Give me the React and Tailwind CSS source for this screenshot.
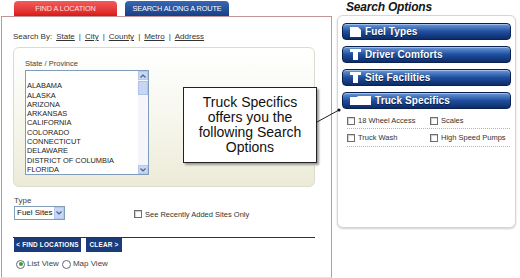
import React from 'react';

const states = [
    '',
    'ALABAMA',
    'ALASKA',
    'ARIZONA',
    'ARKANSAS',
    'CALIFORNIA',
    'COLORADO',
    'CONNECTICUT',
    'DELAWARE',
    'DISTRICT OF COLUMBIA',
    'FLORIDA',
];

// =========================================
// Small form pieces
// =========================================
const Check = ({ label, className = '' }) => (
    <div className={`flex items-center gap-[3px] ${className}`}>
        <span className="w-[8px] h-[8px] border border-[#6d6d6d] bg-white shadow-[inset_1px_1px_1px_#ccc] shrink-0" />
        <span className="text-[7.5px] leading-[9px] text-[#333]">{label}</span>
    </div>
);

const Radio = ({ label, checked }) => (
    <div className="flex items-center gap-[2px]">
        <span className="w-[9px] h-[9px] rounded-full border border-[#5f6b72] bg-white flex items-center justify-center">
            {checked && <span className="w-[4px] h-[4px] rounded-full bg-[#3a9a3a]" />}
        </span>
        <span className="text-[8px] leading-[10px] text-[#444]">{label}</span>
    </div>
);

const Chevron = ({ up }) => (
    <svg width="6" height="4" viewBox="0 0 6 4">
        <path d={up ? 'M0.5 3.5 L3 1 L5.5 3.5' : 'M0.5 0.5 L3 3 L5.5 0.5'} stroke="#4d6185" strokeWidth="1.2" fill="none" />
    </svg>
);

const FolderIcon = ({ kind }) => {
    if (kind === 'open') {
        return (
            <svg width="21" height="9" viewBox="0 0 21 9" className="shrink-0">
                <path d="M0 1 H7 L8 0 H21 V9 H0 Z" fill="#fff" />
            </svg>
        );
    }
    if (kind === 'square') {
        return (
            <svg width="11" height="10" viewBox="0 0 11 10" className="shrink-0">
                <path d="M0 0 H8 L11 3 V10 H0 Z" fill="#fff" />
            </svg>
        );
    }
    return (
        <svg width="11" height="11" viewBox="0 0 11 11" className="shrink-0">
            <path d="M0 0 H11 V3 H8 V11 H3 V3 H0 Z" fill="#fff" />
        </svg>
    );
};

const OptionBar = ({ label, icon }) => (
    <div className="h-[17px] rounded-[4px] border border-[#0a2250] bg-gradient-to-b from-[#6e9ad8] via-[#1f4f9f] to-[#0d2c68] shadow-[inset_0_1px_0_#9fc0ee] flex items-center pl-[7px] gap-[4px]">
        <FolderIcon kind={icon} />
        <span className="text-white font-bold text-[10px] leading-none tracking-[0.1px] [text-shadow:0_1px_0_#0a1f44]">{label}</span>
    </div>
);

// =========================================
// App
// =========================================
export default function App() {
    return (
        <div className="relative w-[520px] h-[278px] overflow-hidden bg-white flex font-['Liberation_Sans',Arial,sans-serif]">
            {/* Left: location search */}
            <div className="ml-[1px] w-[331px] flex flex-col">
                <div className="h-[16px] pl-[13px] flex items-end gap-[8px]">
                    <div className="w-[103px] h-[15px] rounded-t-[4px] bg-gradient-to-b from-[#f45a5a] to-[#d91616] flex items-center justify-center">
                        <span className="text-[7.3px] leading-none text-[#ffe0e0] tracking-[-0.1px]">FIND A LOCATION</span>
                    </div>
                    <div className="w-[104px] h-[15px] rounded-t-[4px] bg-gradient-to-b from-[#3868b4] to-[#173f86] flex items-center justify-center">
                        <span className="text-[7.3px] leading-none text-white tracking-[-0.1px]">SEARCH ALONG A ROUTE</span>
                    </div>
                </div>

                <div className="flex-1 border-t border-l border-r border-[#c49595] border-b border-b-[#e6e6e0] pl-[11px] pt-[15px] flex flex-col">
                    <div className="text-[8px] leading-[10px] text-[#333] flex gap-[4px]">
                        <span>Search By:</span>
                        <span className="underline">State</span>
                        <span>|</span>
                        <span className="underline">City</span>
                        <span>|</span>
                        <span className="underline">County</span>
                        <span>|</span>
                        <span className="underline">Metro</span>
                        <span>|</span>
                        <span className="underline">Address</span>
                    </div>

                    <div className="mt-[5px] w-[302px] h-[140px] rounded-[6px] border border-[#dcdccd] bg-gradient-to-b from-white via-[#f7f7ee] to-[#ecebd8] pl-[11px] pt-[11px]">
                        <div className="text-[7.5px] leading-[9px] text-[#444]">State / Province</div>
                        <div className="mt-[2px] w-[124px] h-[105px] border border-[#7f9db9] bg-white flex">
                            <div className="flex-1 pl-[1px] pt-[1px]">
                                {states.map((s, i) => (
                                    <div key={i} className="h-[9.3px] text-[7.4px] leading-[9.3px] text-[#222]">{s}</div>
                                ))}
                            </div>
                            <div className="w-[10px] bg-[#f4f6fb] flex flex-col">
                                <div className="h-[9px] bg-[#c8d6f6] border border-[#b7c8ee] flex items-center justify-center"><Chevron up /></div>
                                <div className="h-[14px] mt-[1px] bg-[#c8d6f6] border border-[#b1c2ea]" />
                                <div className="flex-1" />
                                <div className="h-[9px] bg-[#c8d6f6] border border-[#b7c8ee] flex items-center justify-center"><Chevron /></div>
                            </div>
                        </div>
                    </div>

                    <div className="mt-[9px] text-[8px] leading-[10px] text-[#444] pl-[1px]">Type</div>
                    <div className="flex items-center">
                        <div className="ml-[1px] w-[51px] h-[14px] border border-[#7f9db9] bg-white flex items-center">
                            <span className="flex-1 pl-[2px] text-[8px] leading-none text-[#111]">Fuel Sites</span>
                            <span className="w-[10px] h-[12px] bg-[#c8d6f6] border border-[#b7c8ee] flex items-center justify-center"><Chevron /></span>
                        </div>
                        <Check label="See Recently Added Sites Only" className="ml-[69px] mt-[2px]" />
                    </div>

                    <div className="mt-[17px] w-[302px] h-[1px] bg-[#333]" />
                    <div className="flex gap-[5px] pl-[1px]">
                        <div className="h-[14px] w-[67px] bg-[#1b3c7a] flex items-center justify-center text-white font-bold text-[6.4px] tracking-[0.2px]">&lt; FIND LOCATIONS</div>
                        <div className="h-[14px] w-[36px] bg-[#1b3c7a] flex items-center justify-center text-white font-bold text-[6.4px] tracking-[0.2px]">CLEAR &gt;</div>
                    </div>
                    <div className="mt-[7px] pl-[3px] flex items-center gap-[3px]">
                        <Radio label="List View" checked />
                        <Radio label="Map View" />
                    </div>
                </div>
            </div>

            {/* Right: search options */}
            <div className="flex-1 pl-[5px] flex flex-col">
                <div className="h-[15px] pl-[9px] pt-[1px] text-[12px] leading-[13px] font-bold italic text-[#151515] tracking-[-0.2px]">Search Options</div>
                <div className="w-[179px] h-[213px] rounded-[6px] border border-[#d6d6d6] bg-white shadow-[0_1px_2px_#cfcfcf] px-[4px] pt-[7px] flex flex-col gap-[6px]">
                    <OptionBar label="Fuel Types" icon="square" />
                    <OptionBar label="Driver Comforts" icon="t" />
                    <OptionBar label="Site Facilities" icon="t" />
                    <OptionBar label="Truck Specifics" icon="open" />
                    <div className="-mt-[5px] pl-[5px] pr-[1px]">
                        <div className="h-[19px] flex items-end pb-[3px] border-b border-dotted border-[#b5b5b5]">
                            <Check label="18 Wheel Access" className="w-[83px]" />
                            <Check label="Scales" />
                        </div>
                        <div className="h-[18px] flex items-end pb-[4px] border-b border-dotted border-[#b5b5b5]">
                            <Check label="Truck Wash" className="w-[83px]" />
                            <Check label="High Speed Pumps" />
                        </div>
                    </div>
                </div>
            </div>

            {/* Callout annotation */}
            <div className="absolute left-[183px] top-[87px] w-[134px] h-[76px] border border-[#222] bg-white shadow-[2px_2px_2px_#9a9a9a] flex items-center justify-center">
                <p className="text-[14px] leading-[15px] text-[#111] text-center">
                    Truck Specifics<br />offers you the<br />following Search<br />Options
                </p>
            </div>
            <svg className="absolute left-[316px] top-[106px]" width="26" height="20" viewBox="0 0 26 20">
                <line x1="1" y1="16" x2="23" y2="4" stroke="#222" strokeWidth="1" />
                <circle cx="23" cy="4" r="1.6" fill="#111" />
            </svg>
        </div>
    );
}
